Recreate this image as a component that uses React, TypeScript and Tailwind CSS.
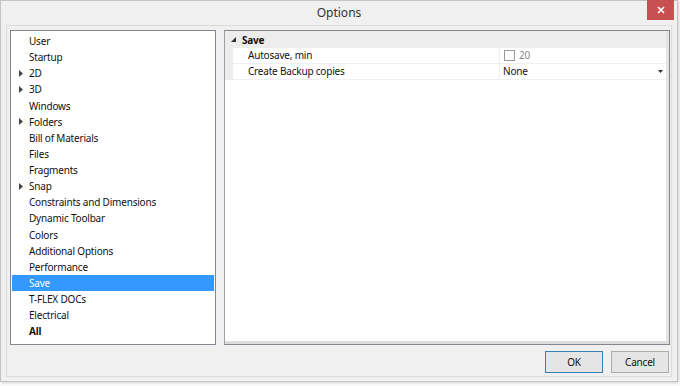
import React from 'react';

const items: { label: string; arrow?: boolean; bold?: boolean }[] = [
  { label: 'User' },
  { label: 'Startup' },
  { label: '2D', arrow: true },
  { label: '3D', arrow: true },
  { label: 'Windows' },
  { label: 'Folders', arrow: true },
  { label: 'Bill of Materials' },
  { label: 'Files' },
  { label: 'Fragments' },
  { label: 'Snap', arrow: true },
  { label: 'Constraints and Dimensions' },
  { label: 'Dynamic Toolbar' },
  { label: 'Colors' },
  { label: 'Additional Options' },
  { label: 'Performance' },
  { label: 'Save' },
  { label: 'T-FLEX DOCs' },
  { label: 'Electrical' },
  { label: 'All', bold: true },
];

const selected = 'Save';

function Arrow() {
  return (
    <svg width="4" height="7" viewBox="0 0 4 7" className="shrink-0">
      <path d="M0 0 L4 3.5 L0 7 Z" fill="#444" />
    </svg>
  );
}

export default function App() {
  return (
    <div
      className="w-[680px] h-[386px] bg-white overflow-hidden text-[10px] tracking-[-0.2px] text-[#111]"
      style={{ fontFamily: '"Noto Sans", "Open Sans", sans-serif' }}
    >
      <div className="w-[678px] h-[382px] bg-[#f0f0f0] border border-[#c4c4c4] flex flex-col shadow-[1px_1px_3px_rgba(0,0,0,0.2)]">
        {/* title bar */}
        <div className="h-[24px] flex items-center relative shrink-0">
          <div className="flex-1 text-center text-[12px] tracking-normal text-[#333] pb-[1px]">Options</div>
          <div className="absolute right-[3px] top-[-1px] w-[27px] h-[20px] bg-[#c75050] flex items-center justify-center">
            <svg width="8" height="8" viewBox="0 0 8 8">
              <path d="M1 1 L7 7 M7 1 L1 7" stroke="#fff" strokeWidth="1.6" />
            </svg>
          </div>
        </div>

        {/* content frame */}
        <div className="ml-[5px] mr-[5px] mb-[4px] flex-1 border border-[#dcdcdc] bg-[#f0f0f0] flex flex-col pt-[4px] pl-[3px] pr-[1px]">
          <div className="flex gap-[8px] h-[315px]">
            {/* left tree */}
            <div className="w-[206px] shrink-0 bg-white border border-[#828790] pt-[2px]">
              {items.map((it) => {
                const sel = it.label === selected;
                return (
                  <div
                    key={it.label}
                    className={`h-[16.13px] flex items-center mx-[1px] ${sel ? 'bg-[#3399ff] text-white' : ''}`}
                  >
                    <div className="w-[17px] flex justify-end pr-[6px]">{it.arrow && <Arrow />}</div>
                    <span className={`leading-[16px] ${it.bold ? 'font-bold' : ''}`}>{it.label}</span>
                  </div>
                );
              })}
            </div>

            {/* right property grid */}
            <div className="flex-1 bg-white border border-[#828790] border-l-[#a0a0a0] flex flex-col">
              <div className="flex-1 flex">
                <div className="flex-1 flex flex-col">
                  <div className="h-[17px] bg-[#ededed] flex items-center">
                    <div className="w-[17px] flex justify-center">
                      <svg width="5" height="5" viewBox="0 0 5 5">
                        <path d="M5 0 L5 5 L0 5 Z" fill="#333" />
                      </svg>
                    </div>
                    <span className="font-bold leading-[16px]">Save</span>
                  </div>
                  <div className="flex h-[16px] border-b border-[#f0f0f0]">
                    <div className="w-[8px] bg-[#ededed]" />
                    <div className="w-[267px] pl-[15px] border-r border-[#f0f0f0] leading-[15px]">Autosave, min</div>
                    <div className="flex-1 flex items-center pl-[4px] gap-[4px] text-[#8a8a8a]">
                      <div className="w-[11px] h-[11px] border border-[#9a9a9a] bg-white" />
                      <span className="leading-[15px]">20</span>
                    </div>
                  </div>
                  <div className="flex h-[16px] border-b border-[#f0f0f0]">
                    <div className="w-[8px] bg-[#ededed]" />
                    <div className="w-[267px] pl-[15px] border-r border-[#f0f0f0] leading-[15px]">Create Backup copies</div>
                    <div className="flex-1 flex items-center pl-[3px] pr-[3px] justify-between">
                      <span className="leading-[15px]">None</span>
                      <svg width="5" height="3" viewBox="0 0 5 3">
                        <path d="M0 0 L5 0 L2.5 3 Z" fill="#333" />
                      </svg>
                    </div>
                  </div>
                </div>
                <div className="w-[3px] bg-[#e4e4e4]" />
              </div>
              <div className="h-[3px] bg-[#dcdcdc]" />
            </div>
          </div>

          {/* buttons */}
          <div className="flex justify-end gap-[8px] mt-[6px] pr-[1px]">
            <button className="w-[58px] h-[22px] border border-[#3c7fb1] bg-[#e5e5e5] text-[10px] leading-none">OK</button>
            <button className="w-[58px] h-[22px] border border-[#acacac] bg-[#e5e5e5] text-[10px] leading-none">Cancel</button>
          </div>
        </div>
      </div>
    </div>
  );
}
